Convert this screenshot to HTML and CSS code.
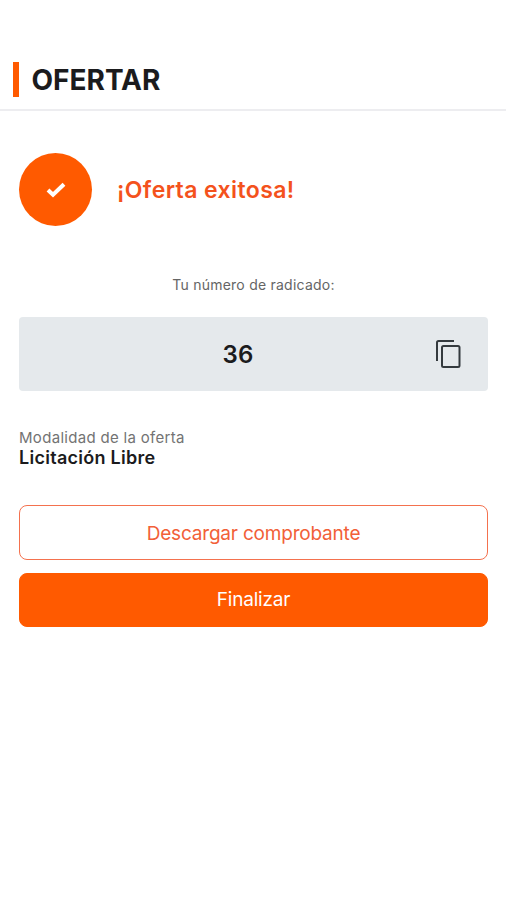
FILE: index.html
```html
<!DOCTYPE html>
<html lang="es">
<head>
<meta charset="utf-8">
<title>Ofertar</title>
<link rel="stylesheet" href="styles.css">
</head>
<body>
<header class="header"><span class="accent"></span><h1 class="title">OFERTAR</h1></header>
<main class="content">
  <section class="status">
    <span class="badge"><svg width="20" height="16" viewBox="0 0 20 16"><path d="M2 8 7 12.7 18 2.2" fill="none" stroke="#fff" stroke-width="4"/></svg></span>
    <h2 class="message">¡Oferta exitosa!</h2>
  </section>
  <p class="caption">Tu número de radicado:</p>
  <div class="number">
    <span class="value">36</span>
    <svg class="copy" width="25" height="28" viewBox="0 0 25 28" fill="none" stroke="#343a3e" stroke-width="2"><path d="M1 21V2.5Q1 1 2.5 1H18"/><rect x="6" y="6" width="17.5" height="21" rx="1.5"/></svg>
  </div>
  <section class="mode">
    <p class="label">Modalidad de la oferta</p>
    <p class="kind">Licitación Libre</p>
  </section>
  <div class="actions">
    <button class="button outline"><span class="download">Descargar comprobante</span></button>
    <button class="button solid"><span class="finish">Finalizar</span></button>
  </div>
</main>
</body>
</html>
```

FILE: styles.css
```css
* { box-sizing: border-box; margin: 0; }
body { background: #fff; color: #1b1b1d; font-family: Inter, "Liberation Sans", sans-serif; }
.header { display: flex; height: 111px; padding: 62px 0 0 13px; gap: 12.5px; border-bottom: 2px solid #ededf0; }
.accent { width: 6px; height: 35px; background: #ff5a00; }
.title { padding-top: 1px; font-size: 28px; line-height: 35px; font-weight: 650; letter-spacing: 0; }
.content { padding: 42px 18px 0 19px; }
.status { display: flex; align-items: center; gap: 25px; height: 73px; }
.badge { display: flex; align-items: center; justify-content: center; width: 73px; height: 73px; border-radius: 50%; background: #ff5a00; }
.message { color: #f4521c; font-size: 23px; line-height: 30px; font-weight: 600; letter-spacing: .4px; }
.caption { margin-top: 49px; text-align: center; font-size: 14px; line-height: 20px; letter-spacing: .23px; color: #656565; }
.number { display: flex; align-items: center; height: 74px; margin-top: 22px; padding: 0 27px 0 21px; background: #e5e9ec; border-radius: 4px; }
.value { flex: 1; padding-top: 1px; text-align: center; font-size: 24px; line-height: 30px; font-weight: 600; letter-spacing: .3px; }
.mode { margin-top: 37px; }
.label { font-size: 15px; line-height: 20px; letter-spacing: .31px; color: #737373; }
.kind { font-size: 18px; line-height: 20px; font-weight: 600; letter-spacing: .27px; }
.actions { display: grid; gap: 13px; margin-top: 37px; }
.button { height: 55px; border-radius: 8px; border: 1px solid #f4714e; font-family: inherit; font-size: 19px; line-height: 26px; font-weight: 400; letter-spacing: -.2px; }
.outline { padding-top: 3px; color: #f26038; background: #fff; }
.solid { height: 54px; padding-bottom: 2px; color: #fff; background: #ff5a00; border-color: #ff5a00; }
```
